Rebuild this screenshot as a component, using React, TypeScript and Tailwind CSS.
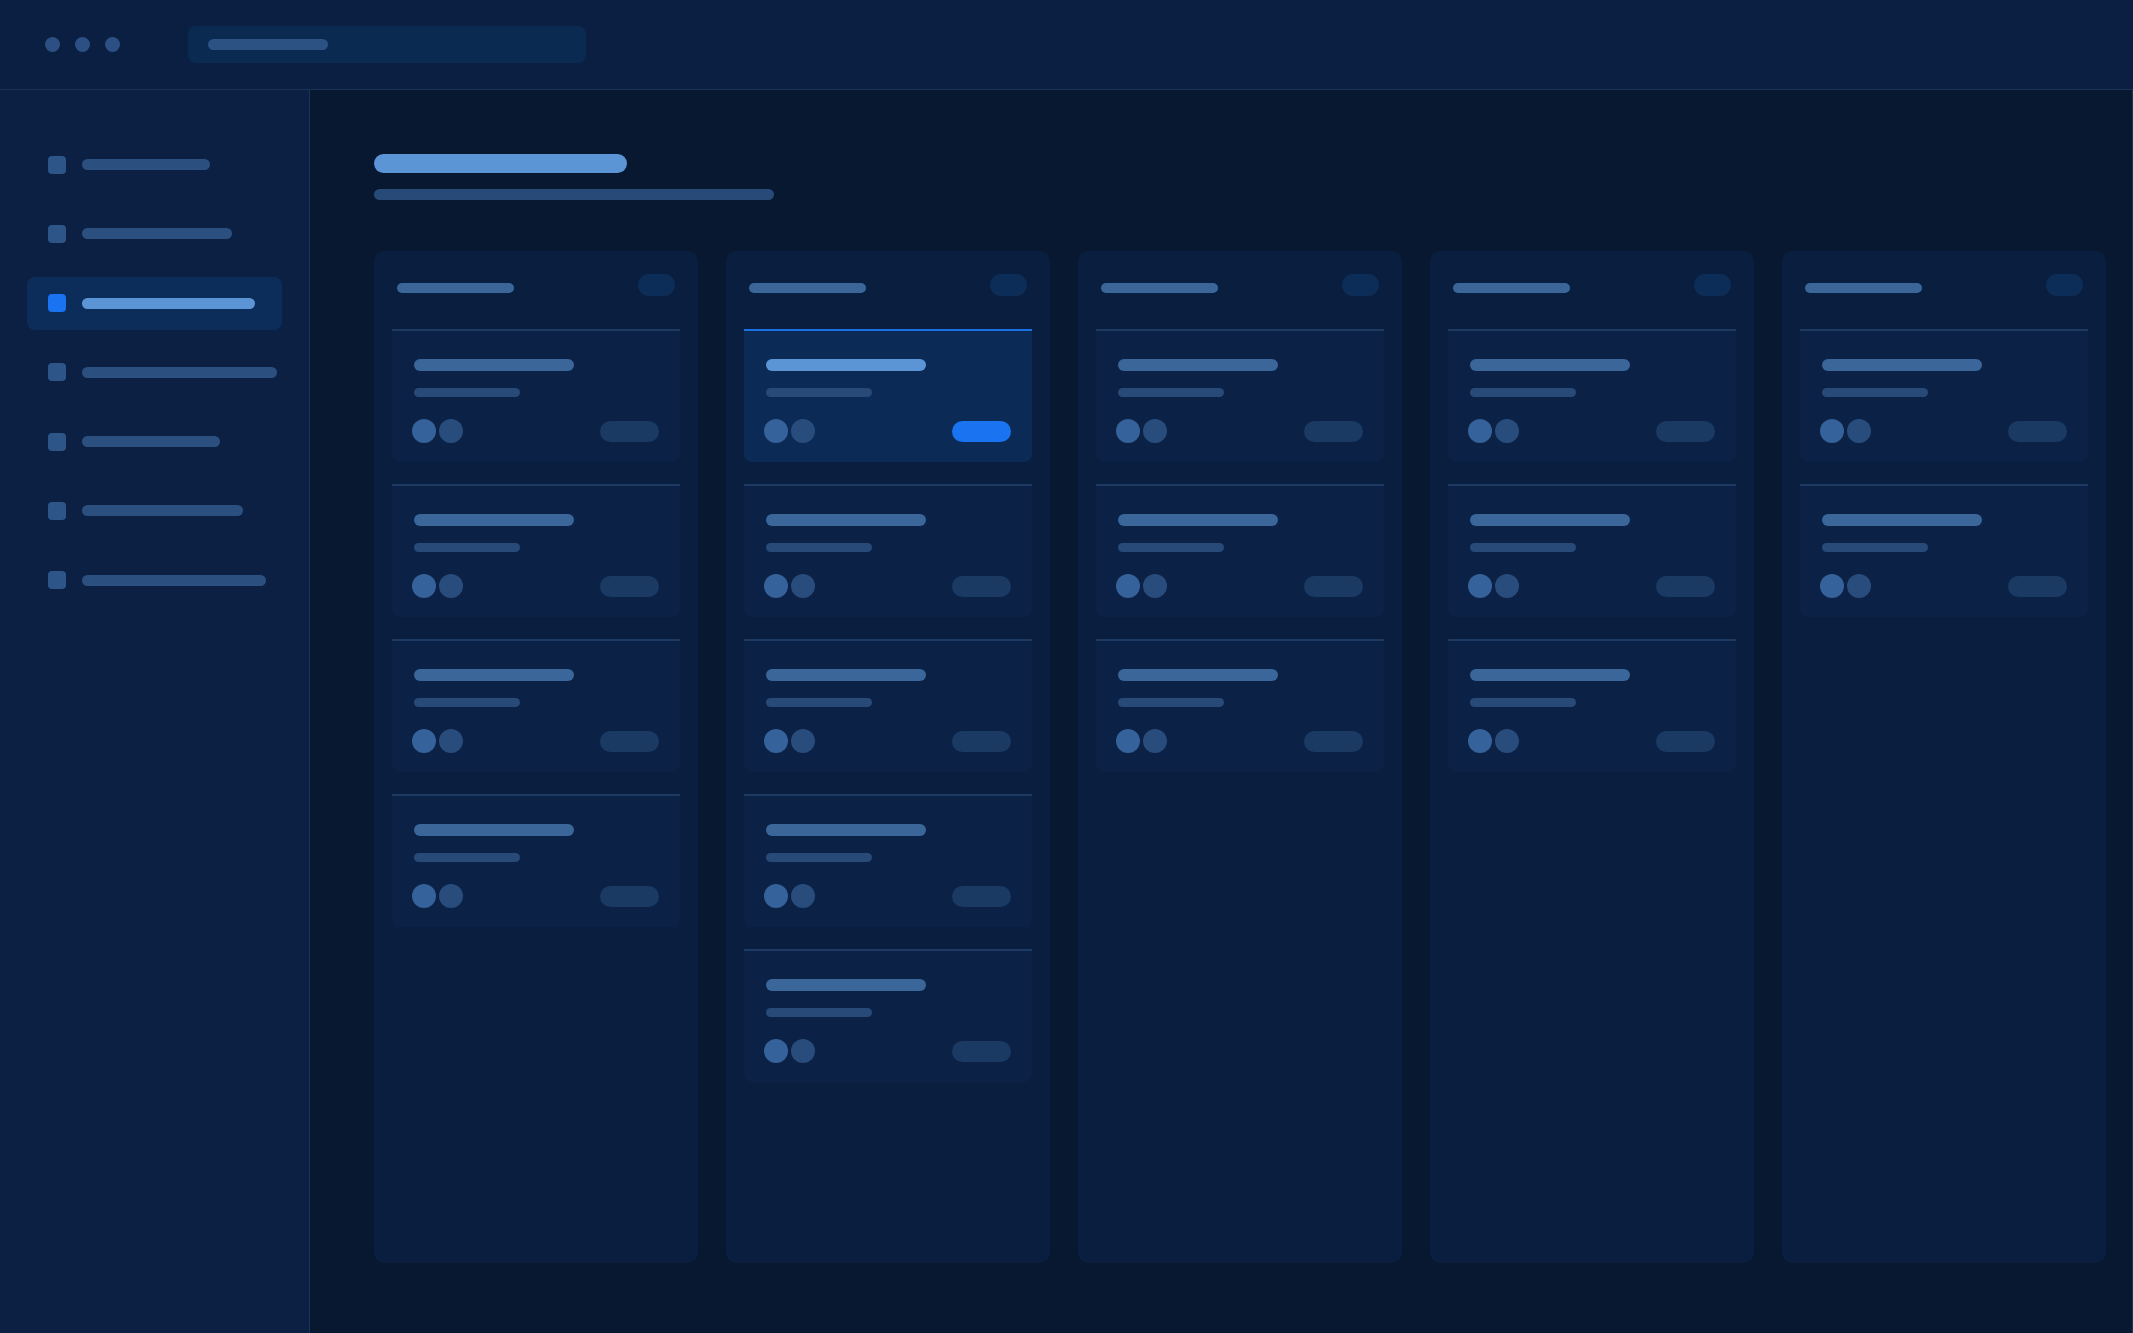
const navItems = [128, 150, 173, 195, 138, 161, 184];
const columns = [4, 5, 3, 3, 2];

function Card({ active }: { active?: boolean }) {
  return (
    <div
      className={
        active
          ? 'border-t-2 border-[#1b6fe6] bg-[#0b2b56] rounded-b-[8px] pt-[28px] pl-[22px] pr-[21px] pb-[19px]'
          : 'border-t-2 border-[#1d3a62] bg-[#0b2246] rounded-b-[8px] pt-[28px] pl-[22px] pr-[21px] pb-[19px]'
      }
    >
      <div className={active ? 'h-[12px] w-[160px] rounded-full bg-[#5b95d6]' : 'h-[12px] w-[160px] rounded-full bg-[#3a6699]'} />
      <div className="mt-[17px] h-[9px] w-[106px] rounded-full bg-[#274a78]" />
      <div className="mt-[22px] flex items-center justify-between">
        <div className="flex gap-[3px] -ml-[2px]">
          <div className="w-6 h-6 rounded-full bg-[#35629a]" />
          <div className="w-6 h-6 rounded-full bg-[#284c7c]" />
        </div>
        <div className={active ? 'h-[21px] w-[59px] rounded-full bg-[#1a73f0]' : 'h-[21px] w-[59px] rounded-full bg-[#1b3a63]'} />
      </div>
    </div>
  );
}

function Column({ count, first }: { count: number; first?: boolean }) {
  return (
    <div className="w-[324px] shrink-0 rounded-[10px] bg-[#0a1f3f] px-[18px] pt-[23px]">
      <div className="h-[55px] px-[5px] flex items-start justify-between">
        <div className="mt-[9px] h-[10px] w-[117px] rounded-full bg-[#3a6699]" />
        <div className="h-[22px] w-[37px] rounded-full bg-[#0c2d58]" />
      </div>
      <div className="flex flex-col gap-[22px]">
        {Array.from({ length: count }).map((_, i) => (
          <Card key={i} active={first && i === 0} />
        ))}
      </div>
    </div>
  );
}

export default function App() {
  return (
    <div className="h-screen w-full flex flex-col bg-[#071830] overflow-hidden">
      <header className="h-[90px] shrink-0 flex items-center bg-[#0b1f43] border-b border-[#1a3358] pl-[45px]">
        <div className="flex gap-[15px]">
          <div className="w-[15px] h-[15px] rounded-full bg-[#2c5083]" />
          <div className="w-[15px] h-[15px] rounded-full bg-[#2c5083]" />
          <div className="w-[15px] h-[15px] rounded-full bg-[#2c5083]" />
        </div>
        <div className="ml-[68px] w-[398px] h-[37px] rounded-[8px] bg-[#0b2a52] flex items-center px-[20px]">
          <div className="h-[11px] w-[120px] rounded-full bg-[#2c5284]" />
        </div>
      </header>

      <div className="flex-1 flex min-h-0">
        <aside className="w-[310px] shrink-0 bg-[#0b2043] border-r border-[#1a3358] px-[27px] pt-[48px] flex flex-col gap-[16.3px]">
          {navItems.map((w, i) => {
            const active = i === 2;
            return (
              <div
                key={i}
                className={
                  active
                    ? 'h-[53px] flex items-center gap-[16px] pl-[21px] rounded-[8px] bg-[#0c2d5a]'
                    : 'h-[53px] flex items-center gap-[16px] pl-[21px] rounded-[8px]'
                }
              >
                <div className={active ? 'w-[18px] h-[18px] shrink-0 rounded-[4px] bg-[#1a73f0]' : 'w-[18px] h-[18px] shrink-0 rounded-[4px] bg-[#2e5588]'} />
                <div
                  className={active ? 'h-[11px] shrink-0 rounded-full bg-[#5b95d6]' : 'h-[11px] shrink-0 rounded-full bg-[#2b5080]'}
                  style={{ width: w }}
                />
              </div>
            );
          })}
        </aside>

        <main className="flex-1 min-w-0 flex flex-col pt-[64px] pl-[64px] pb-[70px] border-r border-[#1a3358]">
          <div className="h-[19px] w-[253px] rounded-full bg-[#5b95d6]" />
          <div className="mt-[16px] h-[11px] w-[400px] rounded-full bg-[#274a78]" />
          <div className="mt-[51px] flex-1 min-h-0 flex gap-[28px]">
            {columns.map((c, i) => (
              <Column key={i} count={c} first={i === 1} />
            ))}
          </div>
        </main>
      </div>
    </div>
  );
}
